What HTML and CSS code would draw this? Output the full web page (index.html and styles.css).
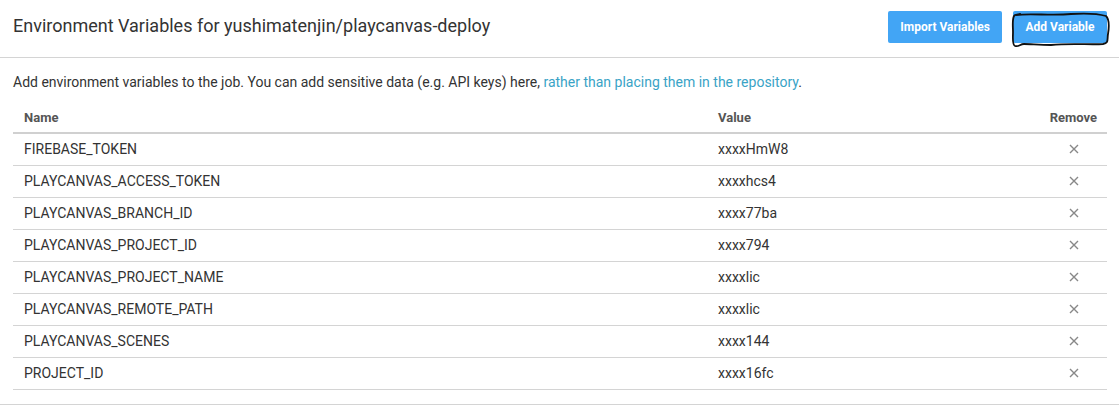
FILE: index.html
```html
<!DOCTYPE html>
<html>
<head>
<meta charset="utf-8">
<link rel="stylesheet" href="styles.css">
</head>
<body>
<div class="page">
  <header class="head">
    <h1 class="title">Environment Variables for yushimatenjin/playcanvas-deploy</h1>
    <div class="actions">
      <button class="btn">Import Variables</button>
      <button class="btn btn-add">Add Variable
        <svg class="scribble" width="100" height="36" viewBox="0 0 100 36">
          <path d="M5 3 C 20 1, 40 4, 60 2 C 75 1, 88 2, 95 4 C 99 8, 98 16, 97 22 C 96 28, 98 31, 92 32 C 80 33, 60 31, 40 33 C 28 33, 20 32, 13 32 C 9 32, 8 35, 4 34 C 1 33, 2 26, 2 20 C 2 14, 1 8, 3 4 C 4 2, 6 3, 9 2" fill="none" stroke="#111" stroke-width="1.8" stroke-linecap="round" stroke-linejoin="round"/>
        </svg>
      </button>
    </div>
  </header>
  <section class="body">
    <p class="desc">Add environment variables to the job. You can add sensitive data (e.g. API keys) here, <a class="link">rather than placing them in the repository</a>.</p>
    <table class="vars">
      <thead>
        <tr><th class="c-name">Name</th><th class="c-value">Value</th><th class="c-remove">Remove</th></tr>
      </thead>
      <tbody>
        <tr><td>FIREBASE_TOKEN</td><td>xxxxHmW8</td><td class="x"><svg class="xi" width="10" height="10" viewBox="0 0 10 10"><path d="M1 1 L9 9 M9 1 L1 9"/></svg></td></tr>
        <tr><td>PLAYCANVAS_ACCESS_TOKEN</td><td>xxxxhcs4</td><td class="x"><svg class="xi" width="10" height="10" viewBox="0 0 10 10"><path d="M1 1 L9 9 M9 1 L1 9"/></svg></td></tr>
        <tr><td>PLAYCANVAS_BRANCH_ID</td><td>xxxx77ba</td><td class="x"><svg class="xi" width="10" height="10" viewBox="0 0 10 10"><path d="M1 1 L9 9 M9 1 L1 9"/></svg></td></tr>
        <tr><td>PLAYCANVAS_PROJECT_ID</td><td>xxxx794</td><td class="x"><svg class="xi" width="10" height="10" viewBox="0 0 10 10"><path d="M1 1 L9 9 M9 1 L1 9"/></svg></td></tr>
        <tr><td>PLAYCANVAS_PROJECT_NAME</td><td>xxxxlic</td><td class="x"><svg class="xi" width="10" height="10" viewBox="0 0 10 10"><path d="M1 1 L9 9 M9 1 L1 9"/></svg></td></tr>
        <tr><td>PLAYCANVAS_REMOTE_PATH</td><td>xxxxlic</td><td class="x"><svg class="xi" width="10" height="10" viewBox="0 0 10 10"><path d="M1 1 L9 9 M9 1 L1 9"/></svg></td></tr>
        <tr><td>PLAYCANVAS_SCENES</td><td>xxxx144</td><td class="x"><svg class="xi" width="10" height="10" viewBox="0 0 10 10"><path d="M1 1 L9 9 M9 1 L1 9"/></svg></td></tr>
        <tr><td>PROJECT_ID</td><td>xxxx16fc</td><td class="x"><svg class="xi" width="10" height="10" viewBox="0 0 10 10"><path d="M1 1 L9 9 M9 1 L1 9"/></svg></td></tr>
      </tbody>
    </table>
  </section>
</div>
</body>
</html>
```

FILE: styles.css
```css
* { box-sizing: border-box; }
html, body { margin: 0; padding: 0; background: #fff; }
body {
  font-family: Roboto, "Liberation Sans", sans-serif;
  color: #333;
  width: 1119px;
  height: 406px;
  overflow: hidden;
}
.head {
  display: flex;
  align-items: center;
  justify-content: space-between;
  height: 58px;
  padding: 0 12px 0 13px;
  border-bottom: 1px solid #d4d4d4;
}
.title {
  margin: 0;
  font-size: 18px;
  font-weight: 400;
  color: #333;
  padding-bottom: 6px;
}
.actions {
  display: flex;
  gap: 11px;
  padding-bottom: 4px;
}
.btn {
  position: relative;
  font-family: Roboto, "Liberation Sans", sans-serif;
  font-size: 12px;
  font-weight: 700;
  color: #fff;
  background: #42a5f5;
  border: none;
  border-radius: 2px;
  height: 32px;
  padding: 0 12px;
  cursor: pointer;
}
.btn-add { width: 94px; padding: 0; }
.scribble {
  position: absolute;
  left: -2px;
  top: 1px;
  overflow: visible;
}
.body { padding: 0 12px 0 13px; border-bottom: 1px solid #d4d4d4; }
.desc {
  margin: 0;
  padding: 16px 0 0;
  height: 42px;
  font-size: 14px;
  color: #333;
}
.link { color: #3aa3c6; text-decoration: none; }
.vars {
  width: 100%;
  border-collapse: collapse;
  font-size: 14px;
  margin-bottom: 14px;
}
.vars th {
  font-size: 13px;
  font-weight: 700;
  color: #555;
  text-align: left;
  height: 33px;
  padding: 2px 10px 0 11px;
  border-bottom: 2px solid #d0d0d0;
}
.vars td {
  height: 32px;
  padding: 0 10px 0 11px;
  border-bottom: 1px solid #d4d4d4;
  color: #333;
}
.vars .c-name { width: 694px; }
.vars .c-remove { text-align: right; }
.vars td.x {
  text-align: right;
  padding-right: 28px;
  line-height: 0;
}
.xi { stroke: #888; stroke-width: 1.4; fill: none; }
```
